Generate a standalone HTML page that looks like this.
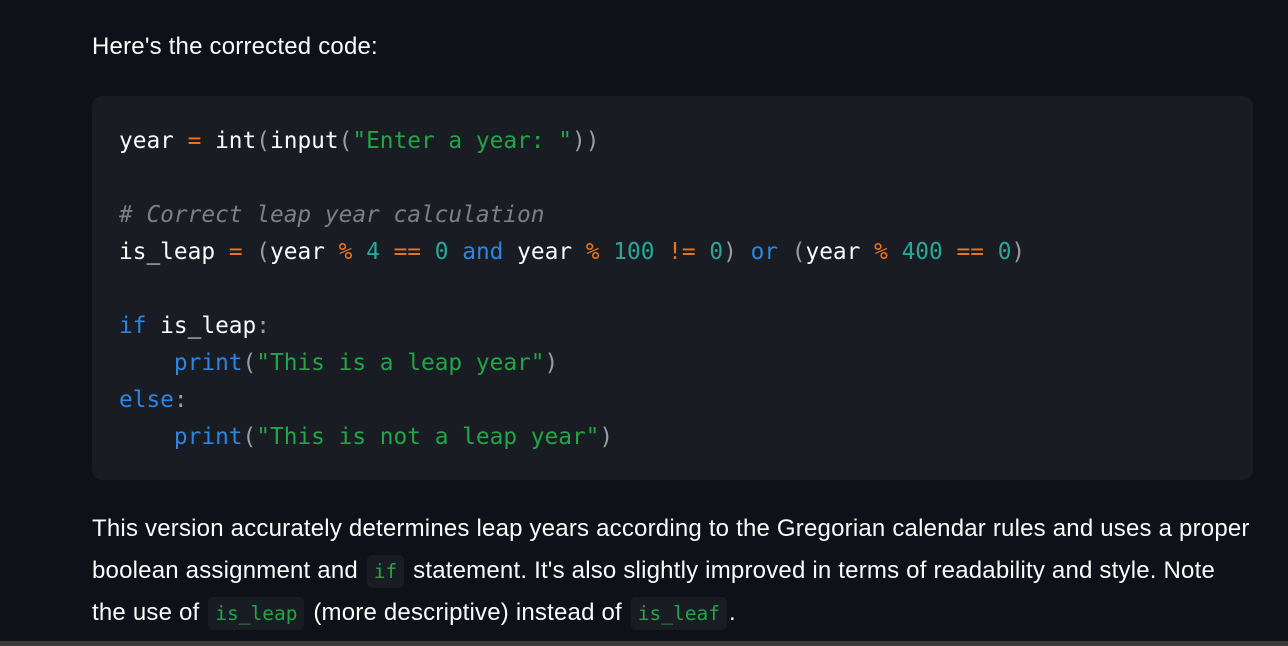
<!DOCTYPE html>
<html><head><meta charset="utf-8"><style>
html,body{margin:0;padding:0;}
body{width:1288px;height:646px;background:#0e1117;color:#fafafa;overflow:hidden;position:relative;font-family:"Liberation Sans",sans-serif;}
.t{position:absolute;left:92px;white-space:nowrap;font-size:24px;letter-spacing:0.2px;}
.code{position:absolute;left:92px;top:96px;width:1161px;height:384px;background:#1a1c23;border-radius:10px;}
.o{color:#e8741f}.s{color:#21a645}.c{color:#7c7f8a;font-style:italic}.k{color:#2a86e0}.n{color:#27a89b}.p{color:#9a9ca4}
code{font-family:"DejaVu Sans Mono","Liberation Mono",monospace;font-size:19.5px;color:#21a645;background:#1a1c23;border-radius:5px;padding:5px 7px;margin:0 2px;letter-spacing:0;}
.bar{position:absolute;left:0;top:641px;width:1288px;height:5px;background:#3b3b3b;}
</style></head><body>
<div class="t" style="top:33px;">Here's the corrected code:</div>
<div class="code"></div>
<pre style="margin:0;position:absolute;left:119px;top:123px;font-family:'DejaVu Sans Mono','Liberation Mono',monospace;font-size:22.8px;line-height:37px;color:#fafafa;">year <span class="o">=</span> int<span class="p">(</span>input<span class="p">(</span><span class="s">"Enter a year: "</span><span class="p">))</span>

<span class="c"># Correct leap year calculation</span>
is_leap <span class="o">=</span> <span class="p">(</span>year <span class="o">%</span> <span class="n">4</span> <span class="o">==</span> <span class="n">0</span> <span class="k">and</span> year <span class="o">%</span> <span class="n">100</span> <span class="o">!=</span> <span class="n">0</span><span class="p">)</span> <span class="k">or</span> <span class="p">(</span>year <span class="o">%</span> <span class="n">400</span> <span class="o">==</span> <span class="n">0</span><span class="p">)</span>

<span class="k">if</span> is_leap<span class="p">:</span>
    <span class="k">print</span><span class="p">(</span><span class="s">"This is a leap year"</span><span class="p">)</span>
<span class="k">else</span><span class="p">:</span>
    <span class="k">print</span><span class="p">(</span><span class="s">"This is not a leap year"</span><span class="p">)</span></pre>
<div class="t" style="top:515px;">This version accurately determines leap years according to the Gregorian calendar rules and uses a proper</div>
<div class="t" style="top:557px;">boolean assignment and <code>if</code> statement. It's also slightly improved in terms of readability and style. Note</div>
<div class="t" style="top:599px;">the use of <code>is_leap</code> (more descriptive) instead of <code>is_leaf</code>.</div>
<div class="bar"></div>
</body></html>
